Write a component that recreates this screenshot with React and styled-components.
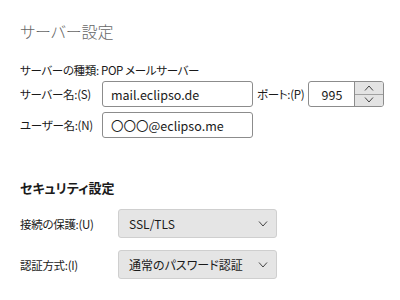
import styled, { createGlobalStyle } from 'styled-components';

const GlobalStyle = createGlobalStyle`
	html, body {
		margin: 0;
		padding: 0;
		background: #fff;
	}
	body {
		font-family: 'Noto Sans CJK JP', 'Noto Sans', sans-serif;
		font-feature-settings: 'palt';
		color: #1a1a1a;
	}
`;

const Page = styled.div`
	width: 400px;
	height: 300px;
	padding: 19px 0 0 20px;
	box-sizing: border-box;
	overflow: hidden;
`;

const Title = styled.h1`
	margin: 0;
	font-size: 16px;
	font-weight: 300;
	color: #666;
	line-height: 24px;
`;

const TypeLine = styled.div`
	margin-top: 18px;
	font-size: 11.5px;
	letter-spacing: -0.35px;
	line-height: 18px;
`;

const Grid = styled.div`
	display: grid;
	grid-template-columns: 82px auto;
	row-gap: 5px;
	margin-top: 2px;
	align-items: center;
`;

const Label = styled.label`
	font-size: 11.5px;
	letter-spacing: -0.3px;
	line-height: 16px;
	white-space: nowrap;
`;

const FieldRow = styled.div`
	display: flex;
	align-items: center;
	gap: 4px;
`;

const TextInput = styled.div`
	width: ${(p) => p.$width}px;
	height: 26px;
	box-sizing: border-box;
	border: 1px solid #8c8c8c;
	border-radius: 3px;
	padding: 0 8px;
	display: flex;
	align-items: center;
	font-size: 12.5px;
	background: #fff;
`;

const Spin = styled.div`
	display: flex;
	border: 1px solid #8c8c8c;
	border-radius: 3px;
	height: 26px;
	box-sizing: border-box;
	overflow: hidden;
`;

const SpinValue = styled.div`
	width: 45px;
	display: flex;
	align-items: center;
	justify-content: center;
	font-size: 12.5px;
`;

const SpinButtons = styled.div`
	width: 28px;
	display: flex;
	flex-direction: column;
	border-left: 1px solid #8c8c8c;
`;

const SpinButton = styled.div`
	flex: 1;
	display: flex;
	align-items: center;
	justify-content: center;
	background: #e3e3e3;
	& + & {
		border-top: 1px solid #a0a0a0;
	}
`;

const SectionTitle = styled.h2`
	margin: 41px 0 0;
	font-size: 13px;
	font-weight: 700;
	line-height: 18px;
`;

const SelectGrid = styled.div`
	display: grid;
	grid-template-columns: 98px auto;
	row-gap: 12px;
	margin-top: 12px;
	align-items: center;
`;

const Select = styled.div`
	width: 159px;
	height: 29px;
	box-sizing: border-box;
	border: 1px solid #cfcfcf;
	border-radius: 3px;
	background: #e5e5e5;
	display: flex;
	align-items: center;
	justify-content: space-between;
	padding: 0 8px 0 10px;
	font-size: 12px;
`;

const Chevron = ({ up }) => (
	<svg width="10" height="6" viewBox="0 0 10 6">
		<path
			d={up ? 'M1 5.5 L5 1 L9 5.5' : 'M1 0.5 L5 5 L9 0.5'}
			fill="none"
			stroke="#444"
			strokeWidth="1"
		/>
	</svg>
);

export default function App() {
	return (
		<>
			<GlobalStyle />
			<Page>
				<Title>サーバー設定</Title>
				<TypeLine>サーバーの種類: POP メールサーバー</TypeLine>
				<Grid>
					<Label>サーバー名:(S)</Label>
					<FieldRow>
						<TextInput $width={151}>mail.eclipso.de</TextInput>
						<Label>ポート:(P)</Label>
						<Spin>
							<SpinValue>995</SpinValue>
							<SpinButtons>
								<SpinButton>
									<Chevron up />
								</SpinButton>
								<SpinButton>
									<Chevron />
								</SpinButton>
							</SpinButtons>
						</Spin>
					</FieldRow>
					<Label>ユーザー名:(N)</Label>
					<FieldRow>
						<TextInput $width={151}>〇〇〇@eclipso.me</TextInput>
					</FieldRow>
				</Grid>
				<SectionTitle>セキュリティ設定</SectionTitle>
				<SelectGrid>
					<Label>接続の保護:(U)</Label>
					<Select>
						SSL/TLS
						<Chevron />
					</Select>
					<Label>認証方式:(I)</Label>
					<Select>
						通常のパスワード認証
						<Chevron />
					</Select>
				</SelectGrid>
			</Page>
		</>
	);
}
